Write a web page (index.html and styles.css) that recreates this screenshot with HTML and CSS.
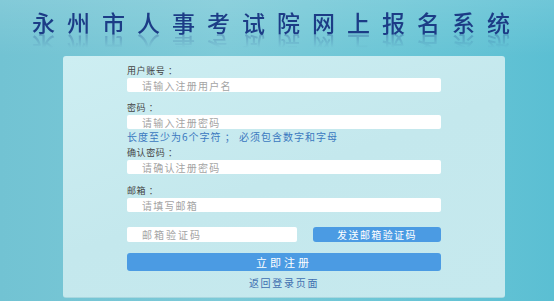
FILE: index.html
```html
<!DOCTYPE html>
<html lang="zh-CN">
<head>
    <meta charset="UTF-8">
    <meta name="viewport" content="width=device-width, initial-scale=1.0">
    <title>永州市人事考试院网上报名系统 - 注册</title>
    <link rel="stylesheet" href="styles.css">
</head>
<body>
    <div class="page">
        <div class="header">
            <h1 class="title">永州市人事考试院网上报名系统</h1>
        </div>

        <div class="panel">
            <form class="reg-form" onsubmit="return false;">
                <div class="field">
                    <label class="label">用户账号 ：</label>
                    <input type="text" class="input" placeholder="请输入注册用户名">
                </div>
                <div class="field">
                    <label class="label">密码 ：</label>
                    <input type="password" class="input" placeholder="请输入注册密码">
                    <div class="hint">长度至少为6个字符 ； 必须包含数字和字母</div>
                </div>
                <div class="field field-tight">
                    <label class="label">确认密码 ：</label>
                    <input type="password" class="input" placeholder="请确认注册密码">
                </div>
                <div class="field">
                    <label class="label">邮箱 ：</label>
                    <input type="text" class="input" placeholder="请填写邮箱">
                </div>
                <div class="code-row">
                    <input type="text" class="input input-code" placeholder="邮箱验证码">
                    <button type="button" class="btn btn-send">发送邮箱验证码</button>
                </div>
                <button type="submit" class="btn btn-submit">立即注册</button>
                <a href="#" class="back-link">返回登录页面</a>
            </form>
        </div>
    </div>
</body>
</html>
```

FILE: styles.css
```css
html, body {
    margin: 0;
    padding: 0;
}
body {
    font-family: "Noto Sans CJK SC", "Noto Sans", sans-serif;
    background: linear-gradient(90deg, #72c3d3 0%, #7dcad8 40%, #6cc6d6 70%, #5bbfd3 100%);
    height: 301px;
    overflow: hidden;
}
.page {
    width: 554px;
}
.header {
    height: 56px;
    background: linear-gradient(180deg, rgba(255,255,255,0.12) 0%, rgba(255,255,255,0) 100%);
}
.title {
    margin: 0;
    padding: 7px 0 0 32px;
    font-size: 23px;
    line-height: 30px;
    font-weight: 500;
    letter-spacing: 12px;
    white-space: nowrap;
    color: #1c3c86;
    -webkit-box-reflect: below -6px linear-gradient(transparent 55%, rgba(255,255,255,0.35));
}
.panel {
    margin-left: 63px;
    width: 442px;
    height: 242px;
    box-sizing: border-box;
    background: linear-gradient(160deg, #cdeef2 0%, #c4e8ed 50%, #c6e9ee 100%);
    border-radius: 3px;
    border-bottom: 1px solid #a9d7df;
    padding: 9px 0 0 64px;
}
.reg-form {
    width: 314px;
    display: flex;
    flex-direction: column;
}
.field {
    display: flex;
    flex-direction: column;
    margin-bottom: 10px;
}
.field-tight {
    margin-bottom: 11px;
}
.label {
    font-size: 9px;
    line-height: 12px;
    height: 12px;
    letter-spacing: 0.6px;
    color: #444;
    margin-bottom: 1px;
}
.input {
    height: 14px;
    box-sizing: border-box;
    border: none;
    border-radius: 2px;
    background: #fff;
    padding: 0 0 0 15px;
    font-family: inherit;
    font-size: 10px;
    letter-spacing: 1.2px;
    color: #333;
    outline: none;
}
.input::placeholder {
    color: #a4a4a4;
}
.hint {
    font-size: 10px;
    line-height: 12px;
    letter-spacing: 1px;
    margin-top: 2px;
    margin-bottom: -6px;
    color: #3a78bf;
}
.code-row {
    display: flex;
    justify-content: space-between;
    margin-top: 5px;
}
.input-code {
    width: 170px;
    height: 15px;
    letter-spacing: 2px;
}
.btn {
    border: none;
    border-radius: 3px;
    background: #4b9be3;
    color: #fff;
    font-family: inherit;
    cursor: pointer;
    padding: 0;
}
.btn-send {
    width: 128px;
    height: 15px;
    font-size: 10px;
    letter-spacing: 1.4px;
}
.btn-submit {
    margin-top: 11px;
    height: 18px;
    font-size: 11px;
    letter-spacing: 3px;
}
.back-link {
    margin-top: 6px;
    text-align: center;
    font-size: 10px;
    line-height: 12px;
    letter-spacing: 1.7px;
    color: #3f6fb0;
    text-decoration: none;
}
```
